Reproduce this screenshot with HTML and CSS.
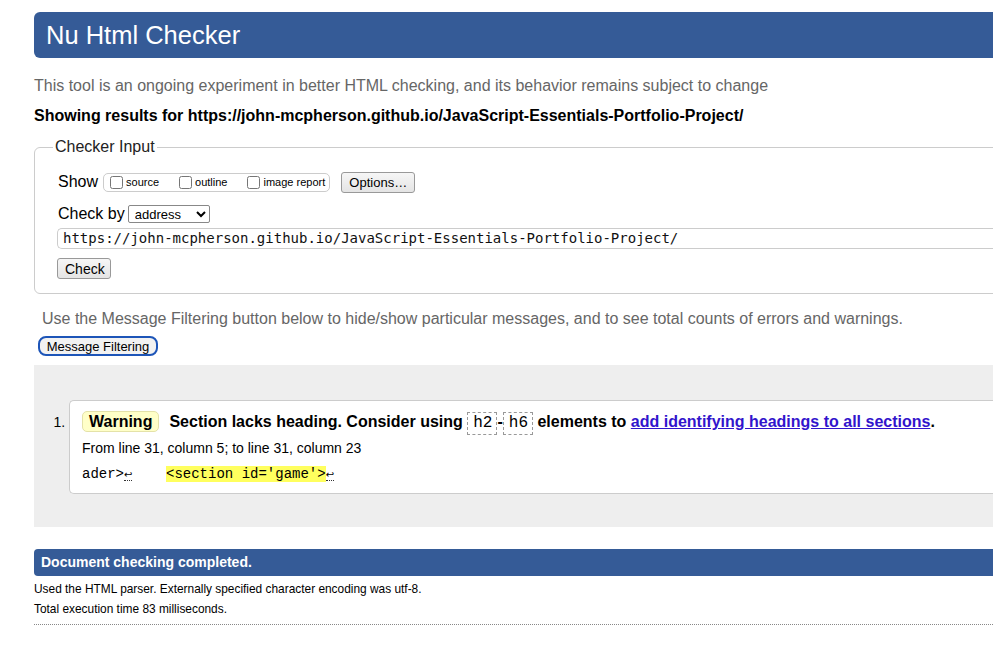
FILE: index.html
```html
<!DOCTYPE html>
<html>
<head>
<meta charset="utf-8">
<title>Nu Html Checker</title>
<link rel="stylesheet" href="styles.css">
</head>
<body>
<h1 class="title">Nu Html Checker</h1>
<p class="intro">This tool is an ongoing experiment in better HTML checking, and its behavior remains subject to change</p>
<p class="showing">Showing results for https://john-mcpherson.github.io/JavaScript-Essentials-Portfolio-Project/</p>

<form class="checker">
  <fieldset class="fs">
    <legend class="legend">Checker Input</legend>
    <div class="row show-row">
      <span class="label">Show</span>
      <span class="opts">
        <label class="opt"><input type="checkbox" class="cb"><span>source</span></label>
        <label class="opt"><input type="checkbox" class="cb"><span>outline</span></label>
        <label class="opt"><input type="checkbox" class="cb"><span>image report</span></label>
      </span>
      <button type="button" class="btn options">Options…</button>
    </div>
    <div class="row checkby-row">
      <span class="label">Check by</span>
      <select class="sel"><option>address</option></select>
    </div>
    <div class="url">https://john-mcpherson.github.io/JavaScript-Essentials-Portfolio-Project/</div>
    <button type="button" class="btn check">Check</button>
  </fieldset>
</form>

<p class="filter-note">Use the Message Filtering button below to hide/show particular messages, and to see total counts of errors and warnings.</p>
<button type="button" class="filter-btn">Message Filtering</button>

<div class="results">
  <ol class="msgs">
    <li class="msg">
      <p class="msg-line"><span class="badge">Warning</span><span class="msg-text">Section lacks heading. Consider using <code class="tag">h2</code>-<code class="tag">h6</code> elements to <a class="link" href="#">add identifying headings to all sections</a>.</span></p>
      <p class="loc">From line 31, column 5; to line 31, column 23</p>
      <p class="extract"><code class="ex">ader&gt;<b class="lf">↩</b>    <mark class="hl">&lt;section id='game'&gt;</mark><b class="lf">↩</b></code></p>
    </li>
  </ol>
</div>

<p class="done">Document checking completed.</p>
<p class="small first">Used the HTML parser. Externally specified character encoding was utf-8.</p>
<p class="small">Total execution time 83 milliseconds.</p>
<div class="dotted"></div>
</body>
</html>
```

FILE: styles.css
```css
html, body {
  overflow: hidden;
}
body {
  margin: 0;
  padding: 12px 0 0 34px;
  background: #fff;
  color: #000;
  font-family: "Liberation Sans", Arial, Helvetica, sans-serif;
  font-size: 16px;
}
.title {
  margin: 0 -40px 0 0;
  height: 46px;
  line-height: 46px;
  padding-left: 12px;
  background: #355b97;
  color: #fff;
  font-size: 25.5px;
  font-weight: normal;
  border-radius: 6px 0 0 6px;
}
.intro {
  margin: 19px 0 0;
  line-height: 18px;
  color: #666;
}
.showing {
  margin: 12px 0 0;
  line-height: 18px;
  font-weight: bold;
}
.checker {
  margin: 13px -40px 0 0;
}
.fs {
  margin: 0;
  padding: 15px 23px 14px;
  border: 1px solid #ccc;
  border-radius: 6px 0 0 6px;
}
.legend {
  margin-left: -5px;
  padding: 0 2px;
  line-height: 18px;
  color: #222;
}
.row {
  display: flex;
  align-items: center;
}
.show-row {
  height: 22px;
}
.label {
  color: #000;
}
.opts {
  display: flex;
  align-items: center;
  margin-left: 5px;
  height: 17px;
  padding: 0 4px 0 6px;
  border: 1px solid #ccc;
  border-radius: 5px;
  font-size: 11px;
}
.opt {
  display: flex;
  align-items: center;
  margin-right: 20px;
}
.opt:last-child {
  margin-right: 0;
}
.cb {
  margin: 0 3px 0 0;
  width: 13px;
  height: 13px;
}
.btn {
  font-family: "Liberation Sans", Arial, sans-serif;
  font-size: 13px;
  color: #000;
  background: linear-gradient(#f6f6f6, #e4e4e4);
  border: 1px solid #999;
  border-radius: 3px;
  padding: 0 7px;
  height: 21px;
}
.options {
  margin-left: 11px;
  width: 74px;
}
.checkby-row {
  margin-top: 11px;
  height: 20px;
}
.sel {
  margin-left: 3px;
  width: 82px;
  height: 18px;
  font-family: "Liberation Sans", Arial, sans-serif;
  font-size: 13px;
  padding: 0 2px;
  border: 1px solid #888;
  border-radius: 2px;
  background: #fff;
}
.url {
  margin: 4px 0 0 -1px;
  height: 21px;
  line-height: 19px;
  padding-left: 5px;
  border: 1px solid #ccc;
  border-right: 0;
  border-radius: 5px 0 0 5px;
  font-family: "DejaVu Sans Mono", monospace;
  font-size: 14px;
  box-sizing: border-box;
  color: #111;
  white-space: nowrap;
}
.check {
  display: block;
  margin: 9px 0 0 -1px;
  width: 54px;
  font-size: 14px;
}
.filter-note {
  margin: 16px 0 0 8px;
  line-height: 18px;
  color: #666;
}
.filter-btn {
  display: block;
  margin: 8px 0 0 4px;
  height: 20px;
  width: 120px;
  padding: 0;
  font-family: "Liberation Sans", Arial, sans-serif;
  font-size: 13px;
  color: #000;
  background: #f2f2f2;
  border: 2px solid #1d55b8;
  border-radius: 8px;
}
.results {
  margin: 9px -40px 0 0;
  background: #eeeeee;
}
.msgs {
  margin: 0;
  padding: 35px 0 33px 35px;
}
.msg {
  background: #fff;
  border: 1px solid #ccc;
  border-right: 0;
  border-radius: 5px 0 0 5px;
  padding: 9px 12px 9px;
}
.msg::marker {
  font-size: 14px;
}
.msg-line {
  margin: 0;
  line-height: 24px;
  font-weight: bold;
  white-space: nowrap;
}
.badge {
  display: inline-block;
  line-height: 19px;
  padding: 0 6px 0 6px;
  background: #ffffc8;
  border: 1px solid #e4e2a8;
  border-radius: 5px;
  margin-right: 10px;
}
.tag {
  display: inline-block;
  font-family: "Liberation Mono", "Courier New", monospace;
  font-weight: normal;
  font-size: 16px;
  line-height: 21px;
  padding: 0 4px 0 5px;
  border: 1px dashed #999;
}
.link {
  color: #3214cc;
  text-decoration: underline;
}
.loc {
  margin: 4px 0 0;
  line-height: 18px;
  font-size: 14px;
}
.extract {
  margin: 7px 0 0;
  line-height: 18px;
}
.ex {
  font-family: "Liberation Mono", "Courier New", monospace;
  font-size: 14px;
  white-space: pre;
}
.lf {
  font-weight: normal;
  font-family: "DejaVu Sans", sans-serif;
  font-size: 10px;
  border-bottom: 1px dotted #333;
}
.hl {
  background: #ffff5e;
  color: #000;
}
.done {
  margin: 22px -40px 0 0;
  height: 27px;
  line-height: 27px;
  padding-left: 7px;
  background: #355b97;
  color: #fff;
  font-size: 14px;
  font-weight: bold;
  border-radius: 4px 0 0 4px;
}
.small {
  margin: 5px 0 0;
  font-size: 11.9px;
  line-height: 15px;
}
.small.first {
  margin-top: 6px;
}
.dotted {
  margin: 7px -40px 0 0;
  border-top: 1px dotted #888;
}
```
